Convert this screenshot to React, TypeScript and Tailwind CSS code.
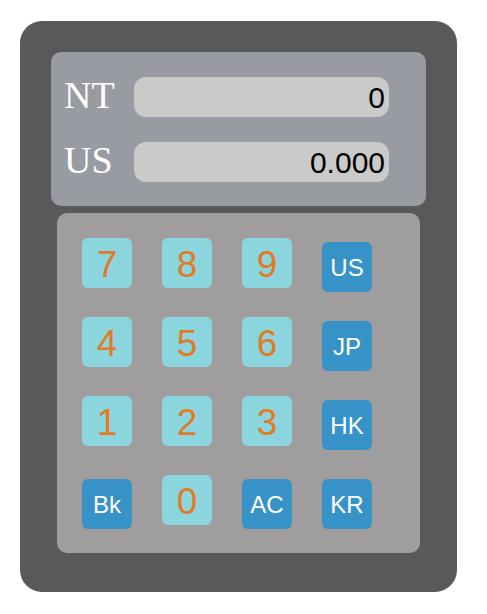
const rows = [
  ['7', '8', '9', 'US'],
  ['4', '5', '6', 'JP'],
  ['1', '2', '3', 'HK'],
  ['Bk', '0', 'AC', 'KR'],
];

const isDigit = (k: string) => /^[0-9]$/.test(k);

function Key({ label }: { label: string }) {
  if (isDigit(label)) {
    return (
      <div className="flex h-[50px] w-[50px] items-center justify-center rounded-[6px] bg-[#8bd6de] pt-[3px] text-[37px] leading-none text-[#e27a26]">
        {label}
      </div>
    );
  }
  return (
    <div className="mt-[4px] flex h-[50px] w-[50px] items-center justify-center rounded-[6px] bg-[#3792c8] pt-[2px] text-[24px] leading-none text-white">
      {label}
    </div>
  );
}

function Display({ label, value }: { label: string; value: string }) {
  return (
    <div className="flex h-[40px] items-center">
      <span className="flex h-[40px] w-[70px] items-center pb-[4px] text-[38px] leading-none text-white" style={{ fontFamily: '"Liberation Serif", serif' }}>
        {label}
      </span>
      <div className="flex h-[40px] w-[255px] items-center justify-end rounded-[12px] bg-[#cacaca] pr-[4px] pt-[2px] text-[30px] leading-none text-black">
        {value}
      </div>
    </div>
  );
}

export default function App() {
  return (
    <div className="min-h-screen bg-white pt-[21px] pl-[20px]" style={{ fontFamily: '"Liberation Sans", Arial, sans-serif' }}>
      <div className="h-[571px] w-[437px] rounded-[22px] bg-[#58595b] pt-[31px] pl-[31px]">
        {/* display panel */}
        <div className="flex h-[154px] w-[375px] flex-col gap-[25px] rounded-[10px] bg-[#989ba1] pt-[25px] pl-[13px]">
          <Display label="NT" value="0" />
          <Display label="US" value="0.000" />
        </div>

        {/* keypad */}
        <div className="mt-[7px] ml-[6px] flex h-[340px] w-[363px] flex-col gap-[25px] rounded-[10px] bg-[#a09d9e] pt-[25px] pl-[25px]">
          {rows.map((row, i) => (
            <div key={i} className="flex items-start gap-[30px]">
              {row.map((k) => (
                <Key key={k} label={k} />
              ))}
            </div>
          ))}
        </div>
      </div>
    </div>
  );
}
